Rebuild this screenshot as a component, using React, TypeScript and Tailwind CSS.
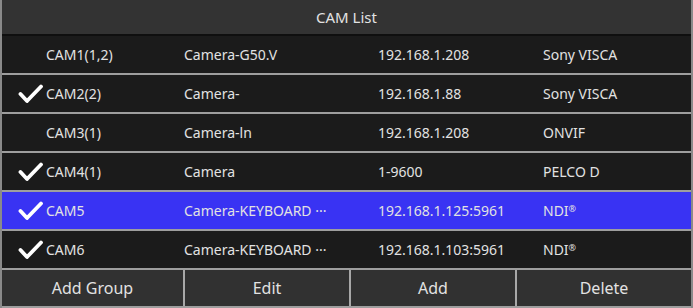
const cams = [
  { name: "CAM1(1,2)", label: "Camera-G50.V", addr: "192.168.1.208", proto: "Sony VISCA", checked: false },
  { name: "CAM2(2)", label: "Camera-", addr: "192.168.1.88", proto: "Sony VISCA", checked: true },
  { name: "CAM3(1)", label: "Camera-ln", addr: "192.168.1.208", proto: "ONVIF", checked: false },
  { name: "CAM4(1)", label: "Camera", addr: "1-9600", proto: "PELCO D", checked: true },
  { name: "CAM5", label: "Camera-KEYBOARD ···", addr: "192.168.1.125:5961", proto: "NDI", reg: true, checked: true, active: true },
  { name: "CAM6", label: "Camera-KEYBOARD ···", addr: "192.168.1.103:5961", proto: "NDI", reg: true, checked: true },
];

const buttons = [
  { label: "Add Group", w: "w-[181px]" },
  { label: "Edit", w: "w-[166px]" },
  { label: "Add", w: "w-[166px]" },
  { label: "Delete", w: "flex-1" },
];

function Check() {
  return (
    <svg width="25" height="20" viewBox="0 0 25 20" className="shrink-0">
      <path d="M2.5 10 L9 17 L23 2.5" fill="none" stroke="white" strokeWidth="3.8" strokeLinecap="round" strokeLinejoin="round" />
    </svg>
  );
}

export default function App() {
  return (
    <div
      className="flex h-[308px] w-[693px] flex-col overflow-hidden border-l-2 border-r-2 border-[#8a8a8a] bg-[#1b1b1b] text-[14px] text-[#e2e2e2]"
      style={{ fontFamily: '"Noto Sans", "DejaVu Sans", sans-serif' }}
    >
      <header className="flex h-[36px] shrink-0 items-center justify-center border-b-2 border-[#0f0f0f] bg-[#333333] text-[15px]">
        CAM List
      </header>

      {cams.map((cam) => (
        <div
          key={cam.name}
          className={`flex h-[39px] shrink-0 items-center border-b-2 border-[#9e9e9e] ${cam.active ? "bg-[#3933f3]" : "bg-[#1b1b1b]"}`}
        >
          <div className="flex w-[182px] items-center pl-[16px]">
            <span className="flex w-[28px] items-center">{cam.checked && <Check />}</span>
            <span>{cam.name}</span>
          </div>
          <div className="w-[194px] whitespace-nowrap">{cam.label}</div>
          <div className="w-[165px] whitespace-nowrap">{cam.addr}</div>
          <div className="whitespace-nowrap">
            {cam.proto}
            {cam.reg && <sup className="text-[9px]">®</sup>}
          </div>
        </div>
      ))}

      <div className="flex flex-1 border-b-2 border-[#9e9e9e]">
        {buttons.map((b, i) => (
          <div
            key={b.label}
            className={`flex ${b.w} items-center justify-center bg-[#313131] text-[16px] ${i > 0 ? "border-l-2 border-[#a8a8a8]" : ""}`}
          >
            {b.label}
          </div>
        ))}
      </div>
    </div>
  );
}
